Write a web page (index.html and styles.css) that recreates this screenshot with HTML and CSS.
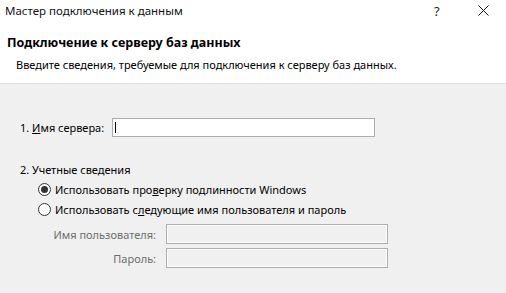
FILE: index.html
```html
<!DOCTYPE html>
<html lang="ru">
<head>
    <meta charset="UTF-8">
    <title>Мастер подключения к данным</title>
    <link rel="stylesheet" href="styles.css">
</head>
<body>
    <div class="dialog">
        <div class="titlebar">
            <span class="title">Мастер подключения к данным</span>
            <span class="help">?</span>
            <span class="close">
                <svg width="11" height="11" viewBox="0 0 11 11"><path d="M0.5 0.5L10.5 10.5M10.5 0.5L0.5 10.5" stroke="#111" stroke-width="1"/></svg>
            </span>
        </div>

        <div class="header">
            <h1>Подключение к серверу баз данных</h1>
            <p>Введите сведения, требуемые для подключения к серверу баз данных.</p>
        </div>

        <div class="content">
            <div class="server-row">
                <label>1. <u>И</u>мя сервера:</label>
                <div class="input active"><span class="caret"></span></div>
            </div>

            <div class="section-label">2. Учетные сведения</div>

            <div class="radio-row">
                <span class="radio checked"></span>
                <span>Использовать про<u>в</u>ерку подлинности Windows</span>
            </div>
            <div class="radio-row">
                <span class="radio"></span>
                <span>Использовать с<u>л</u>едующие имя пользователя и пароль</span>
            </div>

            <div class="creds">
                <label>Имя пользователя:</label>
                <div class="input disabled"></div>
                <label>Пароль:</label>
                <div class="input disabled"></div>
            </div>
        </div>
    </div>
</body>
</html>
```

FILE: styles.css
```css
* {
    margin: 0;
    padding: 0;
    box-sizing: border-box;
}

body {
    font-family: 'Noto Sans', 'Open Sans', sans-serif;
    font-size: 11px;
    color: #000;
    background: #f0f0f0;
    width: 506px;
    height: 293px;
    overflow: hidden;
}

.dialog {
    display: flex;
    flex-direction: column;
    height: 293px;
}

.titlebar {
    display: flex;
    align-items: center;
    height: 21px;
    padding-left: 5px;
    background: #fff;
}

.title {
    flex: 1;
    font-size: 11.5px;
    color: #111;
}

.help {
    width: 12px;
    margin-right: 32px;
    font-size: 13px;
    color: #222;
}

.close {
    display: flex;
    width: 28px;
}

.header {
    background: #fff;
    height: 63px;
    padding: 13px 0 0 7px;
    border-bottom: 1px solid #dcdcdc;
}

.header h1 {
    font-size: 12.5px;
    font-weight: bold;
    line-height: 18px;
}

.header p {
    margin-top: 4px;
    padding-left: 9px;
    line-height: 17px;
}

.content {
    flex: 1;
    padding: 34px 0 0 20px;
}

.server-row {
    display: flex;
    align-items: center;
    gap: 8px;
}

.input {
    height: 19px;
    border: 1px solid #adadad;
}

.input.active {
    width: 263px;
    background: #fff;
    padding: 3px 0 0 2px;
}

.caret {
    display: block;
    width: 1px;
    height: 11px;
    background: #000;
}

.section-label {
    margin-top: 24px;
    line-height: 17px;
}

.radio-row {
    display: flex;
    align-items: center;
    gap: 4px;
    margin-left: 18px;
    margin-top: 3px;
    line-height: 17px;
}

.radio {
    width: 13px;
    height: 13px;
    border: 1px solid #333;
    border-radius: 50%;
    background: #fff;
    position: relative;
}

.radio.checked::after {
    content: "";
    position: absolute;
    left: 2px;
    top: 2px;
    width: 7px;
    height: 7px;
    border-radius: 50%;
    background: #333;
}

.creds {
    display: grid;
    grid-template-columns: 136px 222px;
    column-gap: 10px;
    row-gap: 4px;
    align-items: center;
    margin-top: 6px;
}

.creds label {
    text-align: right;
    color: #6d6d6d;
}

.input.disabled {
    height: 20px;
    background: #f0f0f0;
    border: 1px solid #adadad;
    box-shadow: inset 0 0 0 1px #fff;
}
```
